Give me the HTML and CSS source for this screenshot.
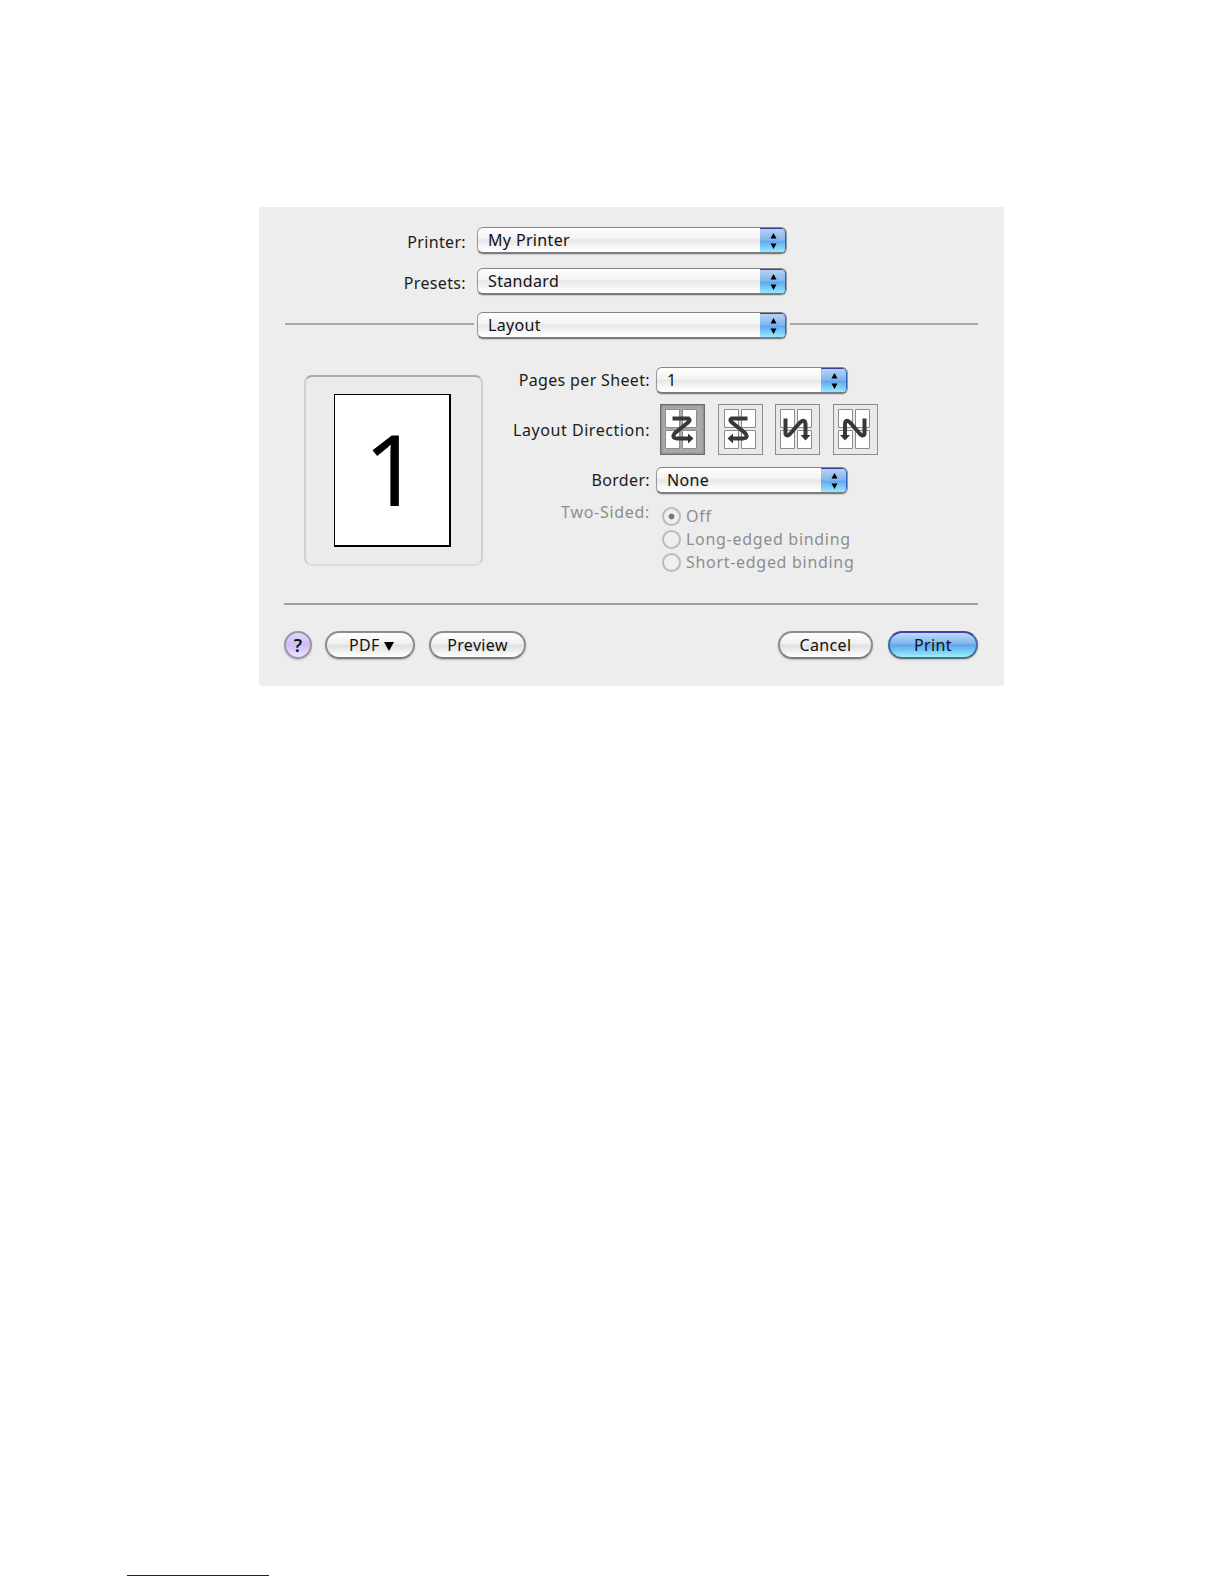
FILE: index.html
```html
<!DOCTYPE html>
<html lang="en">
<head>
    <meta charset="UTF-8">
    <meta name="viewport" content="width=device-width, initial-scale=1.0">
    <title>Print</title>
    <link rel="stylesheet" href="styles.css">
</head>
<body>
    <div class="dialog">
        <div class="row">
            <span class="label">Printer:</span>
            <button class="popup"><span class="value">My Printer</span><span class="arrows"><svg width="27" height="27" viewBox="0 0 27 27"><path d="M13.5 5l3 5.5h-6zM13.5 21l3-5.5h-6z"/></svg></span></button>
        </div>
        <div class="row presets">
            <span class="label">Presets:</span>
            <button class="popup"><span class="value">Standard</span><span class="arrows"><svg width="27" height="27" viewBox="0 0 27 27"><path d="M13.5 5l3 5.5h-6zM13.5 21l3-5.5h-6z"/></svg></span></button>
        </div>
        <div class="pane-row">
            <span class="line left"></span>
            <button class="popup"><span class="value">Layout</span><span class="arrows"><svg width="27" height="27" viewBox="0 0 27 27"><path d="M13.5 5l3 5.5h-6zM13.5 21l3-5.5h-6z"/></svg></span></button>
            <span class="line right"></span>
        </div>

        <div class="pane">
            <div class="preview">
                <div class="page">1</div>
            </div>
            <div class="options">
                <div class="option">
                    <span class="label">Pages per Sheet:</span>
                    <button class="popup small"><span class="value">1</span><span class="arrows"><svg width="27" height="27" viewBox="0 0 27 27"><path d="M13.5 5l3 5.5h-6zM13.5 21l3-5.5h-6z"/></svg></span></button>
                </div>
                <div class="option direction">
                    <span class="label">Layout Direction:</span>
                    <div class="tiles">
                        <svg class="tile selected" viewBox="1 1 43 49">
                            <path class="cells" d="M5.5 5.5h14v18h-14zM22.5 5.5h14v18h-14zM5.5 26.5h14v18h-14zM22.5 26.5h14v18h-14z"/>
                            <path class="stroke" d="M12.5 14.5H28.5Q31 16 28 18.5L15 29Q11 34 17 34.5H29"/>
                            <path class="head" d="M28 29.5l5.500 5-5.500 5z"/>
                        </svg>
                        <svg class="tile" viewBox="1 1 43 49">
                            <path class="cells" d="M6.5 5.5h14v18h-14zM23.5 5.5h14v18h-14zM6.5 26.5h14v18h-14zM23.5 26.5h14v18h-14z"/>
                            <path class="stroke" d="M29.500 14.500H13.500Q11 16 14 18.500L27 29Q31 34 25 34.500H14"/>
                            <path class="head" d="M15 29.500l-5.500 5 5.500 5z"/>
                        </svg>
                        <svg class="tile" viewBox="1 1 43 49">
                            <path class="cells" d="M5.500 5.500h14v18h-14zM22.500 5.500h14v18h-14zM5.500 26.500h14v18h-14zM22.500 26.500h14v18h-14z"/>
                            <path class="stroke" d="M10.500 14.500V30Q12 33 15 30L25 18.500Q30 14.500 30.500 20V32"/>
                            <path class="head" d="M25.500 31h10l-5 5.500z"/>
                        </svg>
                        <svg class="tile" viewBox="1 1 43 49">
                            <path class="cells" d="M5.500 5.500h14v18h-14zM22.500 5.500h14v18h-14zM5.500 26.500h14v18h-14zM22.500 26.500h14v18h-14z"/>
                            <path class="stroke" d="M31.500 14.500V30Q30 33 27 30L17 18.500Q12.500 14.500 12 20V32"/>
                            <path class="head" d="M7 31h10l-5 5.500z"/>
                        </svg>
                    </div>
                </div>
                <div class="option">
                    <span class="label">Border:</span>
                    <button class="popup small"><span class="value">None</span><span class="arrows"><svg width="27" height="27" viewBox="0 0 27 27"><path d="M13.5 5l3 5.5h-6zM13.5 21l3-5.5h-6z"/></svg></span></button>
                </div>
                <div class="option two-sided">
                    <span class="label">Two-Sided:</span>
                    <div class="radios">
                        <div class="radio"><span class="dot on"></span><span>Off</span></div>
                        <div class="radio"><span class="dot"></span><span>Long-edged binding</span></div>
                        <div class="radio"><span class="dot"></span><span>Short-edged binding</span></div>
                    </div>
                </div>
            </div>
        </div>

        <div class="footer">
            <button class="btn help">?</button>
            <button class="btn pdf">PDF <svg width="10" height="9" viewBox="0 0 10 9"><path d="M0 0h10L5 9z"/></svg></button>
            <button class="btn preview-btn">Preview</button>
            <button class="btn cancel">Cancel</button>
            <button class="btn print">Print</button>
        </div>
    </div>
    <div class="link-line"></div>
</body>
</html>
```
FILE: styles.css
```css
* {
    box-sizing: border-box;
}
body {
    margin: 0;
    height: 1584px;
    padding: 207px 0 8px;
    background: #fff;
    display: flex;
    flex-direction: column;
    font-family: "Noto Sans", "Open Sans", sans-serif;
    font-size: 16px;
    letter-spacing: 0.35px;
    color: #1c1c1c;
}
button {
    font: inherit;
    letter-spacing: inherit;
    color: #111;
    padding: 0;
}
.dialog {
    width: 745px;
    height: 479px;
    margin-left: 259px;
    padding: 20px 25px 0;
    background: #ededed;
    border-radius: 2px;
}
.row {
    display: flex;
    height: 27px;
    line-height: 27px;
}
.label {
    text-align: right;
    white-space: nowrap;
}
.row .label {
    width: 182px;
    margin-right: 11px;
    padding-top: 2px;
}
.presets {
    margin-top: 14px;
}
.popup {
    display: flex;
    justify-content: space-between;
    width: 310px;
    height: 27px;
    line-height: 25px;
    border: 1px solid #999;
    border-top-color: #858585;
    border-bottom: 2px solid #7c7c7c;
    border-radius: 6px;
    overflow: hidden;
    background: linear-gradient(#fff 0%, #f3f3f3 45%, #e6e6e6 50%, #fff 95%);
    box-shadow: 0 1px 1px #ccc;
}
.value {
    padding-left: 10px;
}
.arrows {
    width: 27px;
    height: 25px;
    margin-right: -1px;
    border-top: 1px solid #3e3d9a;
    border-right: 2px solid #3260bb;
    border-radius: 0 5px 5px 0;
    background: linear-gradient(#b6d1f4 0%, #82b5ee 45%, #61a9ef 52%, #9befff 100%);
}
.arrows svg {
    display: block;
    margin-top: -1px;
}
.pane-row {
    display: flex;
    margin-top: 17px;
    height: 27px;
}
.line {
    height: 2px;
    margin-top: 11px;
    background: #a8a8a8;
}
.line.left {
    width: 189px;
    margin-left: 1px;
    margin-right: 3px;
}
.line.right {
    width: 188px;
    margin-left: 3px;
}
.pane {
    display: flex;
    height: 264px;
}
.preview {
    width: 179px;
    height: 191px;
    margin: 36px 0 0 20px;
    padding: 17px 28px 0;
    border: 2px solid #cfcfcf;
    border-top-color: #aaa;
    border-bottom-color: #ddd;
    border-radius: 8px;
    background: #ebebeb;
}
.page {
    width: 117px;
    height: 153px;
    border: 1px solid #000;
    border-right-width: 2px;
    border-bottom-width: 2px;
    background: #fff;
    color: #000;
    font-size: 99px;
    line-height: 145px;
    letter-spacing: 0;
    text-align: center;
}
.options {
    margin-top: 28px;
}
.option {
    display: flex;
    height: 27px;
    line-height: 27px;
}
.option .label {
    width: 167px;
    margin-right: 6px;
}
.popup.small {
    width: 192px;
}
.direction {
    height: 51px;
    line-height: 53px;
    margin: 10px 0 12px;
}
.direction .label {
    letter-spacing: 0.55px;
}
.tiles {
    display: grid;
    grid-template-columns: repeat(4, 45px);
    gap: 12.5px;
    margin-left: 4px;
}
.tile {
    width: 45px;
    height: 51px;
    border: 1px solid #8b8b8b;
    background: #e9e9e9;
}
.tile.selected {
    border-color: #6c6c6c;
    background: #aaa;
    box-shadow: inset 0 0 2px 1px #8a8a8a;
}
.cells {
    fill: #fff;
    stroke: #8c8c8c;
}
.stroke {
    fill: none;
    stroke: #383838;
    stroke-width: 4;
}
.head {
    fill: #333;
}
.two-sided {
    color: #8e8e8e;
    height: auto;
    margin-top: 5px;
    letter-spacing: 0.7px;
}
.radios {
    padding: 6px 0 0 6px;
}
.radio {
    display: flex;
    align-items: center;
    height: 23.2px;
    gap: 5px;
}
.dot {
    width: 19px;
    height: 19px;
    border: 2px solid #bbb;
    border-radius: 50%;
    background: #efefef;
}
.dot.on {
    background: radial-gradient(circle, #777 2.5px, #efefef 3.3px);
}
.footer {
    display: flex;
    width: 694px;
    border-top: 2px solid #a0a0a0;
    padding-top: 26px;
}
.btn {
    height: 28px;
    line-height: 25px;
    border: 2px solid #8d8d8d;
    border-bottom-color: #7c7c7c;
    border-radius: 14px;
    background: linear-gradient(#fff 0%, #f0f0f0 45%, #dfdfdf 50%, #fff 100%);
    box-shadow: 0 1px 2px #bbb;
}
.help {
    width: 28px;
    font-size: 18px;
    font-weight: 600;
    letter-spacing: 0;
    border-color: #9a94a8;
    background: linear-gradient(#e3d9fb, #cdbcf5 50%, #eee5ff);
}
.pdf {
    width: 90px;
    margin-left: 13px;
    padding-left: 3px;
}
.preview-btn {
    width: 97px;
    margin-left: 14px;
}
.cancel {
    width: 95px;
    margin-left: auto;
}
.print {
    width: 90px;
    margin-left: 15px;
    border-color: #4142a5 #426ba8 #5a6b78;
    background: linear-gradient(#c0daf8 0%, #80b5ee 45%, #5ca5eb 50%, #9bf0ff 100%);
}
.link-line {
    width: 142px;
    height: 1px;
    margin: auto 0 0 127px;
    background: #191980;
}
```
